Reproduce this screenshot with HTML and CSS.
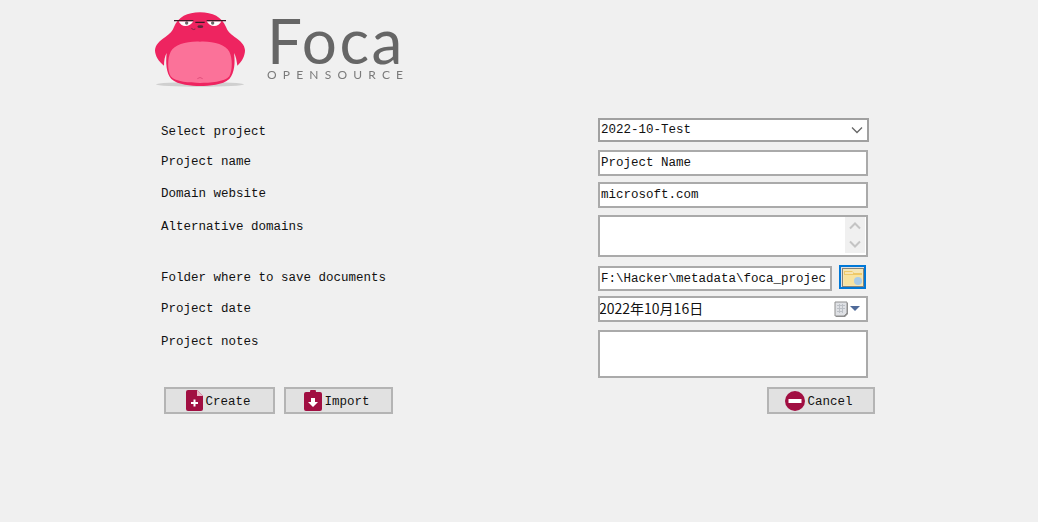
FILE: index.html
```html
<!DOCTYPE html>
<html lang="en">
<head>
<meta charset="utf-8">
<title>Foca</title>
<link rel="stylesheet" href="styles.css">
</head>
<body>
<main class="page">
  <header class="brand">
    <svg class="seal" viewBox="0 0 300 255" width="100" height="85" aria-hidden="true">
      <ellipse cx="150" cy="238" rx="132" ry="7" fill="#cfcfcf"/>
      <path d="M150 22C112 22 84 36 72 66C68 78 60 86 46 96C28 108 16 120 15 136C15 152 26 170 42 182C42 168 44 154 50 144C47 172 48 204 64 222C84 240 125 243 150 243C178 243 218 240 238 222C254 204 256 172 252 144C258 154 260 168 262 182C276 170 285 152 285 136C284 120 272 108 254 96C240 86 232 78 228 66C216 36 188 22 150 22Z" fill="#ee2460"/>
      <path d="M150 110C112 108 74 118 62 140C52 160 52 195 62 214C76 231 120 234 150 234C180 234 224 231 238 214C248 195 248 160 238 140C226 118 188 108 150 110Z" fill="#fb7299"/>
      <path d="M142 221q8-7 16 0" fill="none" stroke="#e2507c" stroke-width="3"/>
      <path d="M86 49H130Q122 63 106 63Q92 63 86 49Z" fill="#fff"/>
      <path d="M170 49H214Q208 63 192 63Q178 63 170 49Z" fill="#fff"/>
      <circle cx="110" cy="54" r="5" fill="#666"/>
      <circle cx="188" cy="54" r="5" fill="#666"/>
      <path d="M72 47H130M136 52H164M170 47H228" stroke="#3a1a26" stroke-width="4" fill="none"/>
      <ellipse cx="151" cy="65" rx="9" ry="4" fill="#5a2a3c"/>
      <path d="M124 70q6 6 12 2" fill="none" stroke="#7a2a45" stroke-width="3"/>
    </svg>
    <div class="wordmark">
      <span class="wordmark-name">Foca</span>
      <span class="wordmark-sub">OPENSOURCE</span>
    </div>
  </header>

  <form class="form">
    <div class="label label-first">Select project</div>
    <div class="field field-select">
      <span>2022-10-Test</span>
      <svg class="chevron" viewBox="0 0 12 8" width="12" height="8" aria-hidden="true"><path d="M1 1.500L6 6.500L11 1.500" fill="none" stroke="#666" stroke-width="1.300"/></svg>
    </div>

    <div class="label">Project name</div>
    <div class="field field-tall">Project Name</div>

    <div class="label">Domain website</div>
    <div class="field field-tall">microsoft.com</div>

    <div class="label">Alternative domains</div>
    <div class="field field-area field-domains">
      <div class="scrollbar">
        <svg viewBox="0 0 12 8" width="12" height="8" aria-hidden="true"><path d="M1 6.500L6 1.500L11 6.500" fill="none" stroke="#c4c4c4" stroke-width="2"/></svg>
        <svg viewBox="0 0 12 8" width="12" height="8" aria-hidden="true"><path d="M1 1.500L6 6.500L11 1.500" fill="none" stroke="#c4c4c4" stroke-width="2"/></svg>
      </div>
    </div>

    <div class="label">Folder where to save documents</div>
    <div class="path-row">
      <div class="field field-path">F:\Hacker\metadata\foca_projec</div>
      <div class="browse">
        <svg viewBox="0 0 22 19" width="22" height="19" aria-hidden="true">
          <rect x="0.500" y="0.500" width="21" height="18" fill="#f4e6b8" stroke="#222" stroke-dasharray="1 1"/>
          <path d="M2 3h8l2 2h8v12H2z" fill="#eec968"/>
          <path d="M2 7h18v10H2z" fill="#f8e3a0"/>
          <path d="M3 5h8" stroke="#fff" stroke-width="1"/>
          <circle cx="16" cy="13" r="4" fill="#a9cbe8"/>
        </svg>
      </div>
    </div>

    <div class="label label-date">Project date</div>
    <div class="field field-date">
      <span class="date-text">2022年10月16日</span>
      <svg class="calendar" viewBox="0 0 26 16" width="26" height="16" aria-hidden="true">
        <path d="M2 2h12v11l-3 3H2z" fill="#8f8f8f"/>
        <path d="M1 1h12v11l-3 3H1z" fill="#dfe1e5" stroke="#8f8f8f"/>
        <path d="M3 4.500h8M3 7.500h8M3 10.500h6M5.500 3v9M8.500 3v9" stroke="#bcc0c6" stroke-width="1"/>
        <path d="M16 5h10l-5 5z" fill="#4f6a99"/>
      </svg>
    </div>

    <div class="label">Project notes</div>
    <div class="field field-area field-notes"></div>
  </form>

  <div class="actions">
    <div class="actions-left">
      <div class="btn btn-create">
        <svg viewBox="0 0 17 21" width="17" height="21" aria-hidden="true">
          <path d="M2 0h9l6 6v13a2 2 0 0 1-2 2H2a2 2 0 0 1-2-2V2a2 2 0 0 1 2-2z" fill="#a10f42"/>
          <path d="M11 0v6h6z" fill="#e7b9c8"/>
          <path d="M8.500 9.500v7M5 13h7" stroke="#fff" stroke-width="2"/>
        </svg>
        <span>Create</span>
      </div>
      <div class="btn btn-import">
        <svg viewBox="0 0 18 21" width="18" height="21" aria-hidden="true">
          <path d="M2 2h4a3 3 0 0 1 6 0h4a2 2 0 0 1 2 2v15a2 2 0 0 1-2 2H2a2 2 0 0 1-2-2V4a2 2 0 0 1 2-2z" fill="#a10f42"/>
          <path d="M7 8h4v4h3l-5 5-5-5h3z" fill="#fff"/>
        </svg>
        <span>Import</span>
      </div>
    </div>
    <div class="btn btn-cancel">
      <svg viewBox="0 0 20 20" width="20" height="20" aria-hidden="true">
        <circle cx="10" cy="10" r="10" fill="#a10f42"/>
        <rect x="3.500" y="8" width="13" height="4" fill="#fff"/>
      </svg>
      <span>Cancel</span>
    </div>
  </div>
</main>
</body>
</html>
```
FILE: styles.css
```css
html, body {
  margin: 0;
  height: 100%;
}

body {
  background: #f0f0f0;
  color: #111;
  font: 12.5px/14px "Liberation Mono", "Noto Sans CJK SC", monospace;
}

.page {
  box-sizing: border-box;
  width: 720px;
  margin-left: 155px;
}

.brand {
  display: flex;
  align-items: flex-start;
  height: 118px;
  margin-left: -5px;
  padding-top: 5px;
  box-sizing: border-box;
}

.seal {
  display: block;
  filter: blur(0.5px);
}

.wordmark {
  display: flex;
  flex-direction: column;
  margin: 7px 0 0 17px;
  color: #666;
  font-family: Lato, sans-serif;
  filter: blur(0.3px);
}

.wordmark-name {
  font-size: 62px;
  line-height: 56px;
  font-weight: 400;
  letter-spacing: 2.5px;
  color: #666;
}

.wordmark-sub {
  font-size: 12px;
  line-height: 14px;
  letter-spacing: 6.2px;
  color: #7a7a7a;
}

.form {
  display: grid;
  grid-template-columns: 443px 271px;
  grid-template-rows: 32px 32px 33px 51px 30px 34px 57px;
  align-items: start;
}

.label {
  padding: 5px 0 0 6px;
}

.label-first {
  padding-top: 7px;
}

.label-date {
  padding-top: 6px;
}

.field {
  box-sizing: border-box;
  width: 270px;
  height: 26px;
  display: flex;
  align-items: center;
  padding: 0 1px;
  background: #fff;
  border: 2px solid #aaa;
  white-space: nowrap;
  overflow: hidden;
}

.field-select {
  width: 271px;
  height: 24px;
  justify-content: space-between;
  border-color: #a0a0a0;
  padding-right: 4px;
}

.field-area {
  align-items: flex-start;
  justify-content: flex-end;
  padding: 0;
}

.field-domains {
  height: 42px;
}

.field-notes {
  height: 48px;
}

.scrollbar {
  width: 20px;
  height: 36px;
  display: flex;
  flex-direction: column;
  align-items: center;
  justify-content: space-around;
  background: #f0f0f0;
  margin-right: 1px;
}

.scrollbar svg {
  display: block;
}

.path-row {
  display: flex;
  align-items: flex-start;
  gap: 7px;
}

.field-path {
  width: 234px;
  height: 25px;
}

.browse {
  box-sizing: border-box;
  width: 27px;
  height: 24px;
  margin-top: -1px;
  display: flex;
  align-items: center;
  justify-content: center;
  background: #e1e1e1;
  border: 2px solid #0078d7;
  overflow: hidden;
}

.browse svg {
  display: block;
  flex: none;
}

.field-date {
  justify-content: space-between;
  padding: 0 6px 2px 0;
}

.date-text {
  font: 14px/18px "Noto Sans CJK SC", sans-serif;
  margin-left: -1px;
}

.calendar {
  display: block;
  margin-top: 2px;
}

.actions {
  display: flex;
  justify-content: space-between;
  padding-left: 9px;
}

.actions-left {
  display: flex;
  gap: 9px;
}

.btn {
  box-sizing: border-box;
  height: 27px;
  display: flex;
  align-items: center;
  justify-content: center;
  gap: 2px;
  padding: 2px 2px 0 0;
  background: #e1e1e1;
  border: 2px solid #b4b4b4;
}

.btn svg {
  display: block;
  flex: none;
  margin-top: -2px;
}

.btn-create {
  width: 111px;
}

.btn-import {
  width: 109px;
  padding-right: 3px;
}

.btn-cancel {
  width: 108px;
  padding-right: 4px;
}
```
